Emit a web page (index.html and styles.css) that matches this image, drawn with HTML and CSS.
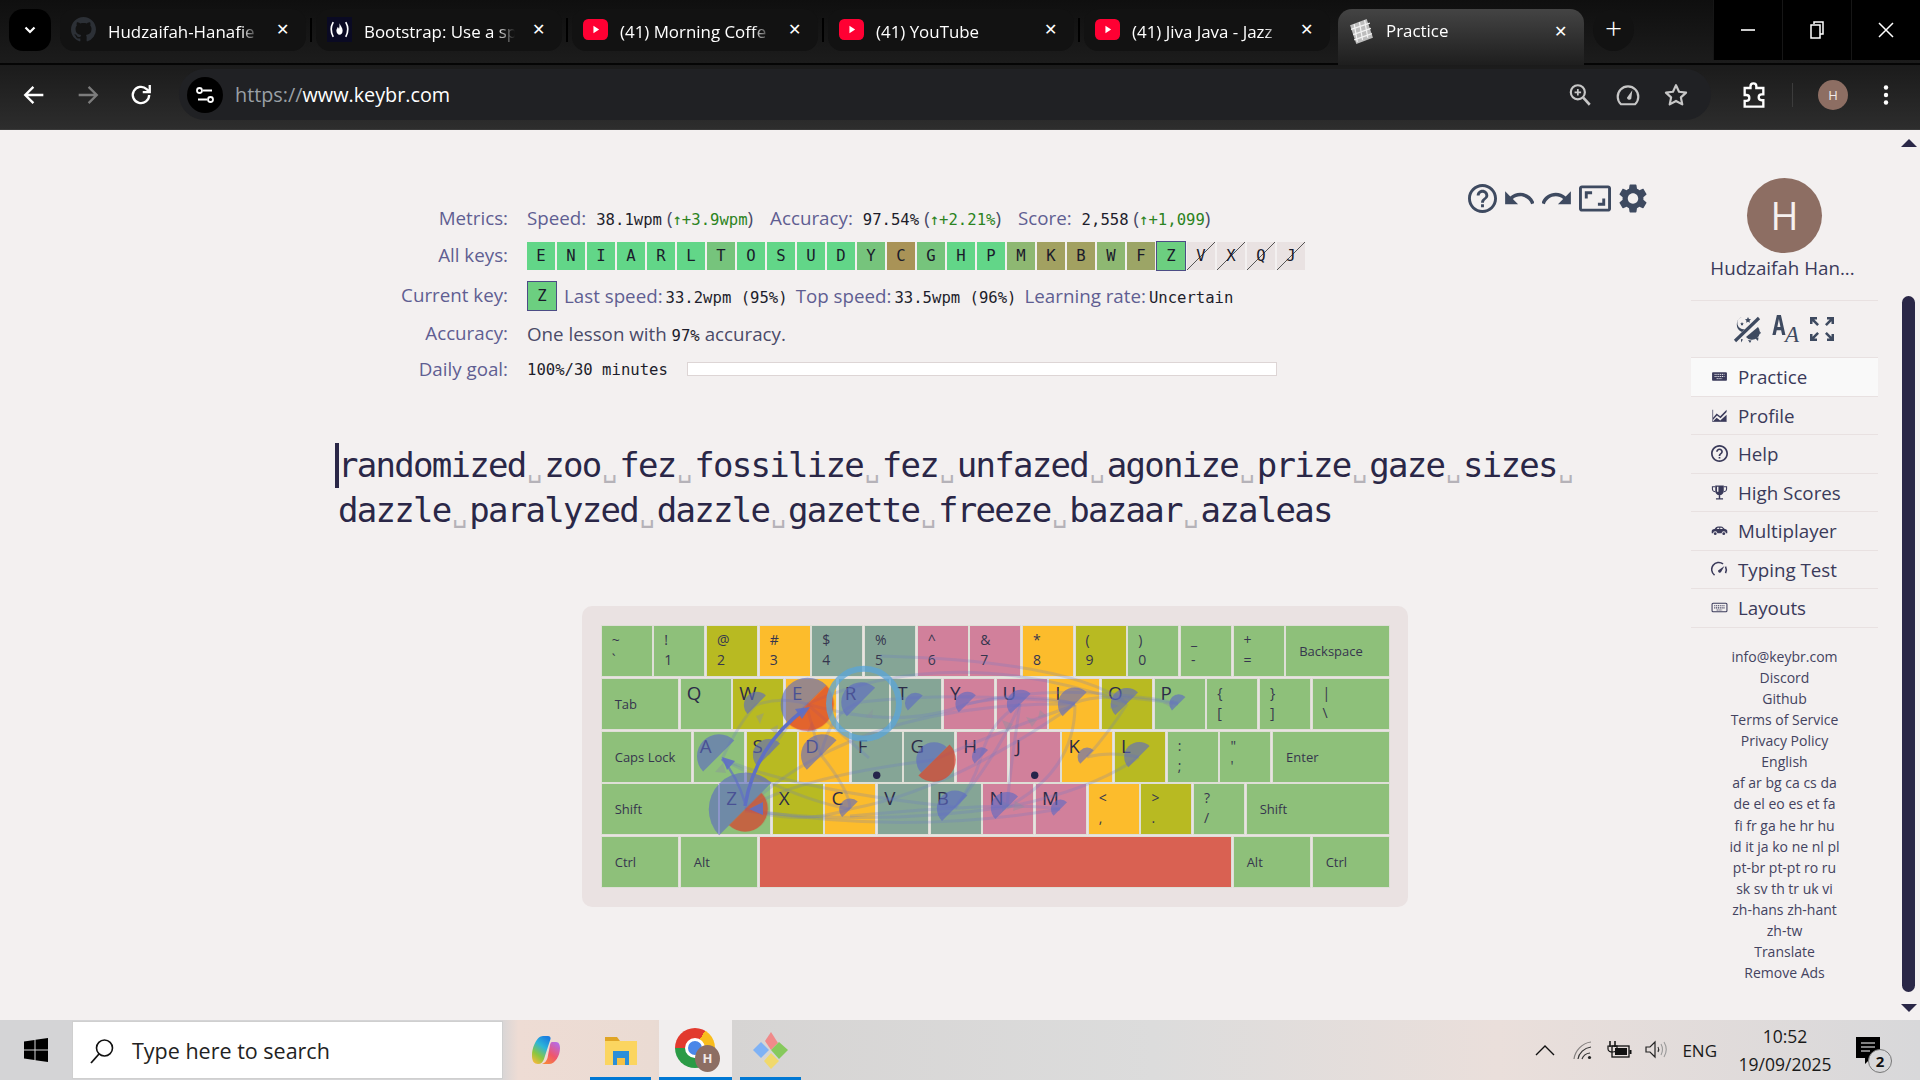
FILE: index.html
```html
<!DOCTYPE html>
<html lang="en">
<head>
<meta charset="utf-8">
<title>Practice</title>
<link rel="stylesheet" href="styles.css">
</head>
<body>
<header class="tabstrip">
  <div class="tab-menu"><svg width="14" height="14" viewBox="0 0 14 14"><path d="M2.5 4.5 7 9l4.500-4.500" fill="none" stroke="#fff" stroke-width="2.200"/></svg></div>
  <div class="tab">
    <svg class="fav" viewBox="0 0 16 16"><path fill="#2c3036" d="M8 0C3.58 0 0 3.58 0 8c0 3.54 2.29 6.53 5.47 7.59.4.07.55-.17.55-.38 0-.19-.01-.82-.01-1.49-2.01.37-2.53-.49-2.69-.94-.09-.23-.48-.94-.82-1.13-.28-.15-.68-.52-.01-.53.63-.01 1.08.58 1.23.82.72 1.21 1.87.87 2.33.66.07-.52.28-.87.51-1.07-1.78-.2-3.64-.89-3.64-3.95 0-.87.31-1.59.82-2.15-.08-.2-.36-1.02.08-2.12 0 0 .67-.21 2.2.82.64-.18 1.32-.27 2-.27.68 0 1.36.09 2 .27 1.53-1.04 2.2-.82 2.2-.82.44 1.1.16 1.92.08 2.12.51.56.82 1.27.82 2.15 0 3.07-1.87 3.75-3.65 3.95.29.25.54.73.54 1.48 0 1.07-.01 1.93-.01 2.2 0 .21.15.46.55.38A8.013 8.013 0 0016 8c0-4.42-3.58-8-8-8z"/></svg>
    <span class="tab-title">Hudzaifah-Hanafie</span><span class="tab-x">✕</span>
  </div>
  <i class="tab-sep"></i>
  <div class="tab">
    <svg class="fav" viewBox="0 0 24 24"><rect width="24" height="24" fill="#0a0a23"/><path d="M6 5Q2 12 6 19M18 5q4 7 0 14" fill="none" stroke="#fff" stroke-width="1.600"/><path d="M12 6c.8 2.500 3 4 3 7s-1.500 4-3 4-3-1.500-3-4c0-1.500 1-2 1.200-3.500.8.5 1.300 1 1.300 2 .5-1.500.5-3.500.5-5.500z" fill="#fff"/></svg>
    <span class="tab-title">Bootstrap: Use a sp</span><span class="tab-x">✕</span>
  </div>
  <i class="tab-sep"></i>
  <div class="tab">
    <svg class="fav" viewBox="0 0 24 24"><rect y="2" width="24" height="20" rx="5" fill="#ff0033"/><path d="M10 8.500v7l5.500-3.500z" fill="#fff"/></svg>
    <span class="tab-title">(41) Morning Coffe</span><span class="tab-x">✕</span>
  </div>
  <i class="tab-sep"></i>
  <div class="tab">
    <svg class="fav" viewBox="0 0 24 24"><rect y="2" width="24" height="20" rx="5" fill="#ff0033"/><path d="M10 8.500v7l5.500-3.500z" fill="#fff"/></svg>
    <span class="tab-title">(41) YouTube</span><span class="tab-x">✕</span>
  </div>
  <i class="tab-sep"></i>
  <div class="tab">
    <svg class="fav" viewBox="0 0 24 24"><rect y="2" width="24" height="20" rx="5" fill="#ff0033"/><path d="M10 8.500v7l5.500-3.500z" fill="#fff"/></svg>
    <span class="tab-title">(41) Jiva Java - Jazz</span><span class="tab-x">✕</span>
  </div>
  <div class="tab tab-active">
    <svg class="fav" viewBox="0 0 24 24"><path d="M1 6 17 0l6 18-16 6z" fill="#bdbdbd"/><path d="M5 5l3 17M10 3l3 17M15 1l3 17M2 10l18-6M4 15l17-6M5 20l17-6" stroke="#f2f2f2" stroke-width="1.200"/></svg>
    <span class="tab-title">Practice</span><span class="tab-x">✕</span>
  </div>
  <div class="tab-new">+</div>
  <div class="win">
    <div class="win-btn"><svg width="14" height="14" viewBox="0 0 14 14"><path d="M0 7h14" stroke="#fff" stroke-width="1.600"/></svg></div>
    <div class="win-btn"><svg width="16" height="18" viewBox="0 0 16 18"><path d="M5 3V1h9v12h-3M2 4h9v13H2z" fill="none" stroke="#fff" stroke-width="1.500"/></svg></div>
    <div class="win-btn"><svg width="16" height="16" viewBox="0 0 16 16"><path d="M1 1l14 14M15 1 1 15" stroke="#fff" stroke-width="1.500"/></svg></div>
  </div>
</header>

<nav class="toolbar">
  <svg class="tb-icon" viewBox="0 0 24 24"><path d="M20 12H5M11.500 5 4.500 12l7 7" fill="none" stroke="#fff" stroke-width="2"/></svg>
  <svg class="tb-icon" viewBox="0 0 24 24"><path d="M4 12h15M12.500 5l7 7-7 7" fill="none" stroke="#7c7c7c" stroke-width="2"/></svg>
  <svg class="tb-icon" viewBox="0 0 24 24"><path d="M19 12a7 7 0 1 1-2.200-5.100L19 9M19.500 3.500V9.500H13.500" fill="none" stroke="#fff" stroke-width="2"/></svg>
  <div class="omni">
    <div class="site-info"><svg width="20" height="20" viewBox="0 0 20 20"><path d="M8 5.500h9M3 14.500h9" stroke="#fff" stroke-width="2"/><circle cx="4.500" cy="5.500" r="2.500" fill="none" stroke="#fff" stroke-width="1.800"/><circle cx="15.500" cy="14.500" r="2.500" fill="none" stroke="#fff" stroke-width="1.800"/></svg></div>
    <div class="url"><span class="url-dim">https://</span>www.keybr.com</div>
    <svg class="omni-icon" viewBox="0 0 24 24"><circle cx="10" cy="9.500" r="6.500" fill="none" stroke="#c7c7c7" stroke-width="2"/><path d="M15 14.500 21 21" stroke="#c7c7c7" stroke-width="2.400"/><path d="M7 9.500h6M10 6.500v6" stroke="#c7c7c7" stroke-width="1.600"/></svg>
    <svg class="omni-icon" viewBox="0 0 24 24"><path d="M5.500 20.500a9.500 9.500 0 1 1 13 0z" fill="none" stroke="#c7c7c7" stroke-width="2"/><path d="M11 14.500 16 7.500l-1 8a2.200 2.200 0 0 1-4-1z" fill="#c7c7c7"/></svg>
    <svg class="omni-icon" viewBox="0 0 24 24"><path d="m12 3 2.800 6 6.500.8-4.800 4.400 1.300 6.500L12 17.500l-5.800 3.200 1.300-6.500-4.800-4.400 6.500-.8z" fill="none" stroke="#c7c7c7" stroke-width="2" stroke-linejoin="round"/></svg>
  </div>
  <svg class="tb-ext" viewBox="0 0 24 24"><path d="M4 6h5V4.500a2.500 2.500 0 0 1 5 0V6h6v5.500h-1.500a2.500 2.500 0 0 0 0 5H20V22H4v-5h1.500a2.500 2.500 0 0 0 0-5H4z" fill="none" stroke="#fff" stroke-width="2"/></svg>
  <i class="tb-sep"></i>
  <div class="tb-avatar">H</div>
  <svg class="tb-kebab" viewBox="0 0 6 24"><circle cx="3" cy="4.500" r="2.200" fill="#fff"/><circle cx="3" cy="12" r="2.200" fill="#fff"/><circle cx="3" cy="19.500" r="2.200" fill="#fff"/></svg>
</nav>

<div class="page">
  <main class="main">
    <div class="tools">
      <svg class="tool tool-help" viewBox="2 2 20 20"><path d="M11 18h2v-2h-2v2zm1-16C6.480 2 2 6.480 2 12s4.480 10 10 10 10-4.480 10-10S17.520 2 12 2zm0 18c-4.410 0-8-3.590-8-8s3.590-8 8-8 8 3.590 8 8-3.590 8-8 8zm0-14c-2.210 0-4 1.790-4 4h2c0-1.100.9-2 2-2s2 .9 2 2c0 2-3 1.750-3 5h2c0-2.250 3-2.500 3-5 0-2.210-1.790-4-4-4z"/></svg>
      <svg class="tool" viewBox="2 4 20 16"><path d="M12.500 8c-2.650 0-5.050.99-6.900 2.600L2 7v9h9l-3.620-3.620c1.390-1.160 3.160-1.880 5.120-1.880 3.540 0 6.550 2.310 7.600 5.500l2.370-.78C21.080 11.030 17.150 8 12.500 8z"/></svg>
      <svg class="tool" viewBox="2 4 20 16"><path d="M18.400 10.600C16.550 8.990 14.150 8 11.500 8c-4.650 0-8.580 3.030-9.960 7.220L3.900 16c1.050-3.190 4.050-5.500 7.600-5.500 1.950 0 3.730.72 5.120 1.880L13 16h9V7l-3.600 3.600z"/></svg>
      <svg class="tool tool-wide" viewBox="1 3 22 18"><path d="M19 12h-2v3h-3v2h5v-5zM7 9h3V7H5v5h2V9zm14-6H3c-1.100 0-2 .9-2 2v14c0 1.100.9 2 2 2h18c1.100 0 2-.9 2-2V5c0-1.100-.9-2-2-2zm0 16.010H3V4.990h18v14.020z"/></svg>
      <svg class="tool" viewBox="2.500 2 19 20"><path d="M19.140 12.940c.04-.3.06-.61.06-.94 0-.32-.02-.64-.07-.94l2.030-1.580c.18-.14.23-.41.12-.61l-1.920-3.320c-.12-.22-.37-.29-.59-.22l-2.390.96c-.5-.38-1.030-.7-1.620-.94l-.36-2.540c-.04-.24-.24-.41-.48-.41h-3.840c-.24 0-.43.17-.47.41l-.36 2.540c-.59.24-1.130.57-1.620.94l-2.390-.96c-.22-.08-.47 0-.59.22L2.740 8.870c-.12.21-.08.47.12.61l2.030 1.580c-.05.3-.09.63-.09.94s.02.64.07.94l-2.030 1.580c-.18.14-.23.41-.12.61l1.920 3.320c.12.22.37.29.59.22l2.390-.96c.5.38 1.030.7 1.620.94l.36 2.540c.05.24.24.41.48.41h3.840c.24 0 .44-.17.47-.41l.36-2.540c.59-.24 1.130-.56 1.620-.94l2.390.96c.22.08.47 0 .59-.22l1.920-3.320c.12-.22.07-.47-.12-.61l-2.010-1.580zM12 15.600c-1.980 0-3.600-1.620-3.600-3.600s1.620-3.600 3.600-3.600 3.600 1.620 3.600 3.600-1.620 3.600-3.600 3.600z"/></svg>
    </div>

    <section class="stats">
      <div class="lab">Metrics:</div>
      <div class="val">
        <span class="name">Speed:</span><span class="m g1">38.1wpm</span><span class="par">(<span class="up m">↑+3.9wpm</span>)</span>
        <span class="name g2">Accuracy:</span><span class="m g1">97.54%</span><span class="par">(<span class="up m">↑+2.21%</span>)</span>
        <span class="name g2">Score:</span><span class="m g1">2,558</span><span class="par">(<span class="up m">↑+1,099</span>)</span>
      </div>
      <div class="lab lab-keys">All keys:</div>
      <div class="val keys">
        <b class="k k-a">E</b><b class="k k-a">N</b><b class="k k-a">I</b><b class="k k-a">A</b><b class="k k-a">R</b><b class="k k-a">L</b><b class="k k-b">T</b><b class="k k-a">O</b><b class="k k-a">S</b><b class="k k-a">U</b><b class="k k-a">D</b><b class="k k-b">Y</b><b class="k k-c">C</b><b class="k k-b">G</b><b class="k k-a">H</b><b class="k k-a">P</b><b class="k k-d">M</b><b class="k k-e">K</b><b class="k k-e">B</b><b class="k k-d">W</b><b class="k k-f">F</b><b class="k k-z">Z</b><b class="k k-n">V</b><b class="k k-n">X</b><b class="k k-n">Q</b><b class="k k-n">J</b>
      </div>
      <div class="lab lab-up">Current key:</div>
      <div class="val">
        <b class="k k-z k-cur">Z</b>
        <span class="name g3">Last speed:</span><span class="m g4">33.2wpm (95%)</span>
        <span class="name g3">Top speed:</span><span class="m g4">33.5wpm (96%)</span>
        <span class="name g3">Learning rate:</span><span class="m g4">Uncertain</span>
      </div>
      <div class="lab">Accuracy:</div>
      <div class="val plain">One lesson with&nbsp;<span class="m">97%</span>&nbsp;accuracy.</div>
      <div class="lab">Daily goal:</div>
      <div class="val daily"><span class="m">100%/30 minutes</span><div class="goal"></div></div>
    </section>

    <section class="text">
      <div class="line line-first">randomized<span class="s">␣</span>zoo<span class="s">␣</span>fez<span class="s">␣</span>fossilize<span class="s">␣</span>fez<span class="s">␣</span>unfazed<span class="s">␣</span>agonize<span class="s">␣</span>prize<span class="s">␣</span>gaze<span class="s">␣</span>sizes<span class="s">␣</span></div>
      <div class="line">dazzle<span class="s">␣</span>paralyzed<span class="s">␣</span>dazzle<span class="s">␣</span>gazette<span class="s">␣</span>freeze<span class="s">␣</span>bazaar<span class="s">␣</span>azaleas</div>
    </section>

    <section class="kb">
      <div class="kb-row">
        <div class="key two g">~<br>`</div><div class="key two g">!<br>1</div><div class="key two o">@<br>2</div><div class="key two y">#<br>3</div><div class="key two t">$<br>4</div><div class="key two t">%<br>5</div><div class="key two p">^<br>6</div><div class="key two p">&amp;<br>7</div><div class="key two y">*<br>8</div><div class="key two o">(<br>9</div><div class="key two g">)<br>0</div><div class="key two g">_<br>-</div><div class="key two g">+<br>=</div><div class="key word g u2">Backspace</div>
      </div>
      <div class="kb-row">
        <div class="key word g u15">Tab</div><div class="key let g">Q</div><div class="key let o">W</div><div class="key let y">E</div><div class="key let t">R</div><div class="key let t">T</div><div class="key let p">Y</div><div class="key let p">U</div><div class="key let y">I</div><div class="key let o">O</div><div class="key let g">P</div><div class="key two g">{<br>[</div><div class="key two g">}<br>]</div><div class="key two g u15">|<br>\</div>
      </div>
      <div class="kb-row">
        <div class="key word g u175">Caps Lock</div><div class="key let g">A</div><div class="key let o">S</div><div class="key let y">D</div><div class="key let t">F</div><div class="key let t">G</div><div class="key let p">H</div><div class="key let p">J</div><div class="key let y">K</div><div class="key let o">L</div><div class="key two g">:<br>;</div><div class="key two g">"<br>'</div><div class="key word g u225">Enter</div>
      </div>
      <div class="kb-row">
        <div class="key word g u225">Shift</div><div class="key let g">Z</div><div class="key let o">X</div><div class="key let y">C</div><div class="key let t">V</div><div class="key let t">B</div><div class="key let p">N</div><div class="key let p">M</div><div class="key two y">&lt;<br>,</div><div class="key two o">&gt;<br>.</div><div class="key two g">?<br>/</div><div class="key word g u275">Shift</div>
      </div>
      <div class="kb-row">
        <div class="key word g u15">Ctrl</div><div class="key word g u15">Alt</div><div class="key r uspace"></div><div class="key word g u15">Alt</div><div class="key word g u15">Ctrl</div>
      </div>
      <svg class="kb-over" viewBox="0 0 826 301">
        <defs><path id="pie" d="M.707-.707A1 1 0 0 0-.707.707Z"/></defs>
        <g transform="translate(-582 -605)">
          <g class="curves">
            <path d="M745 808Q900 835 1060 808"/><path d="M745 810Q880 825 1006 806"/><path d="M745 808Q800 825 850 808"/>
            <path d="M850 808Q950 790 1075 703"/><path d="M722 758Q800 800 850 808"/><path d="M1007 806Q1090 790 1139 756"/>
            <path d="M1007 806Q1075 770 1075 704"/><path d="M1075 703Q1030 690 967 703"/><path d="M807 703Q900 730 967 703"/>
            <path d="M861 701Q960 690 1075 702"/><path d="M1075 702Q1100 690 1178 703"/><path d="M1127 702Q1070 660 880 655"/>
            <path d="M807 703Q950 640 1127 702"/><path d="M1087 756Q1110 750 1139 756"/><path d="M1087 756Q1110 730 1127 703"/>
            <path d="M934 759Q1000 730 1075 704"/><path d="M807 703Q850 740 869 757"/><path d="M768 754Q790 720 807 703"/>
            <path d="M821 754Q810 720 807 705"/><path d="M756 704Q780 695 807 703"/><path d="M722 758Q740 720 756 704"/>
            <path d="M821 754Q850 790 850 808"/><path d="M1020 703Q1010 770 1007 806"/><path d="M981 756Q990 720 1020 703"/>
            <path d="M955 807Q1000 750 1020 703"/><path d="M955 807Q975 780 981 756"/><path d="M745 808Q800 775 934 759"/>
            <path d="M861 701Q830 710 821 754"/><path d="M722 758Q800 790 955 806"/><path d="M745 808Q860 700 1075 703"/>
            <path d="M1060 808Q1010 800 850 815"/><path d="M967 703Q1060 680 1178 702"/>
          </g>
          <g class="heads">
            <path d="M764 712l-8 3 4 8zM778 724l-8 4 7 6zM723 762l-8 9 11 1zM812 720l-5 11 10-1zM1002 719l5 12 6-8zM1026 716l6 10 5-7zM1110 702l9 3-9 3zM1163 702l11-3-2 8zM866 716l7-8-1 9zM1002 800l12 6-12 4zM1015 800l10 6-12 4zM1040 709l7 6-9 2z"/>
          </g>
          <g class="blue">
            <use href="#pie" transform="translate(718.700 755) scale(22)"/><use href="#pie" transform="translate(756.700 703.700) scale(13)"/>
            <use href="#pie" transform="translate(807.300 703.300) scale(27)"/><use href="#pie" transform="translate(861 701) scale(20)"/>
            <use href="#pie" transform="translate(915.300 702) scale(10.500)"/><use href="#pie" transform="translate(967.300 702.700) scale(12)"/>
            <use href="#pie" transform="translate(768.700 753.700) scale(16)"/><use href="#pie" transform="translate(821.700 754) scale(21)"/>
            <use href="#pie" transform="translate(934 759) scale(18)"/><use href="#pie" transform="translate(745.300 808) scale(37)"/>
            <use href="#pie" transform="translate(850 808.300) scale(11)"/><use href="#pie" transform="translate(954.700 807.300) scale(18)"/>
            <use href="#pie" transform="translate(981.300 755.700) scale(9.500)"/><use href="#pie" transform="translate(1020.700 702.700) scale(14)"/>
            <use href="#pie" transform="translate(1074.700 703.300) scale(17)"/><use href="#pie" transform="translate(1126.700 702.700) scale(16)"/>
            <use href="#pie" transform="translate(1178.700 702.700) scale(9.500)"/><use href="#pie" transform="translate(1087 756) scale(9.500)"/>
            <use href="#pie" transform="translate(1139 755.700) scale(15)"/><use href="#pie" transform="translate(1006.700 806.700) scale(16)"/>
            <use href="#pie" transform="translate(1060.300 808) scale(9.500)"/>
          </g>
          <g class="red">
            <use href="#pie" transform="translate(807.300 703.300) rotate(180) scale(27)"/>
            <use href="#pie" transform="translate(934 759) rotate(180) scale(22)"/>
            <use href="#pie" transform="translate(745.300 808) rotate(180) scale(23)"/>
          </g>
          <circle class="ring" cx="864" cy="702.700" r="35"/>
          <path class="thick" d="M745 805Q755 745 805 708"/>
          <path class="thick-head" d="M810 706l-15 2 7 10z"/>
          <path class="thick thin-blue" d="M745 802Q737 775 722 758"/>
          <path class="thick-head" d="M722 756l5 13 8-9zM749 808l14-7v13z"/>
          <circle class="dot" cx="876.700" cy="774.300" r="3.700"/>
          <circle class="dot" cx="1034.700" cy="774.300" r="3.700"/>
        </g>
      </svg>
    </section>
  </main>

  <aside class="side">
    <div class="avatar">H</div>
    <div class="uname">Hudzaifah Han...</div>
    <div class="side-tools">
      <svg class="st-icon" viewBox="0 0 28 28"><path d="M2 26 26 3" stroke="#3e4a60" stroke-width="3.200"/><path d="M9 2a8 8 0 0 0 0 15l3-3a6 6 0 0 1-3-12z" fill="#3e4a60"/><path d="m13 3 1 2 2 .3-1.500 1.500.4 2-1.900-1-1.900 1 .4-2L10 5.300l2-.3zM7 8l.6 1.200 1.200.2-.9.9.2 1.300L7 11l-1.100.6.200-1.300-.9-.9 1.200-.2z" fill="#3e4a60" transform="translate(2 -1)"/><path d="M25 12a7.500 7.500 0 0 1-12 10z" fill="#3e4a60"/><path d="M8 24l2 .5-2 3zM15 25l2 3 1.500-2.500zM22 23l3 3 .5-3.500zM26.500 16l1.500 2-2 1.500z" fill="#3e4a60"/></svg>
      <div class="st-aa"><span class="st-a1">A</span><span class="st-a2">A</span></div>
      <svg class="st-icon st-exp" viewBox="0 0 26 26"><path d="M1 8V1h7v2.500H5.300L10 8.200 8.200 10 3.500 5.300V8zM25 8V1h-7v2.500h2.700L16 8.200 17.800 10l4.700-4.700V8zM1 18v7h7v-2.500H5.300L10 17.800 8.200 16l-4.700 4.700V18zM25 18v7h-7v-2.500h2.700L16 17.800l1.800-1.800 4.700 4.700V18z" fill="#3e4a60"/></svg>
    </div>
    <ul class="menu">
      <li class="item item-on"><svg class="ni" viewBox="0 0 24 24"><path d="M3 6h18c.8 0 1.500.7 1.500 1.500v9c0 .8-.7 1.500-1.500 1.500H3c-.8 0-1.500-.7-1.500-1.500v-9C1.500 6.700 2.200 6 3 6z"/><path d="M5 9h14M5 12h14M8 15h8" stroke="#f9f9f9" stroke-width="1.300" stroke-dasharray="1.600 1"/></svg>Practice</li>
      <li class="item"><svg class="ni" viewBox="0 0 24 24"><path d="M2 21V4h1v11l5-6 5 4 9-9v3l-8.500 9-5-4L3 18v2h19v1z"/><path d="M4 20v-1l4-4 5 4 9-8v9z"/></svg>Profile</li>
      <li class="item"><svg class="ni" viewBox="2 2 20 20"><path d="M11 18h2v-2h-2v2zm1-16C6.480 2 2 6.480 2 12s4.480 10 10 10 10-4.480 10-10S17.520 2 12 2zm0 18c-4.410 0-8-3.590-8-8s3.590-8 8-8 8 3.590 8 8-3.590 8-8 8zm0-14c-2.210 0-4 1.790-4 4h2c0-1.100.9-2 2-2s2 .9 2 2c0 2-3 1.750-3 5h2c0-2.250 3-2.500 3-5 0-2.210-1.790-4-4-4z"/></svg>Help</li>
      <li class="item"><svg class="ni" viewBox="0 0 24 24"><path d="M6 2h12v8a6 6 0 0 1-12 0zM11 15.500h2V20h-2zM7 20h10v2H7z"/><path d="M6 4H2v3c0 2 2 4 4 4M18 4h4v3c0 2-2 4-4 4" fill="none" stroke="#3a3a5a" stroke-width="1.500"/><path d="M8.500 4h2v7h-2z" fill="#f3f0f0"/></svg>High Scores</li>
      <li class="item"><svg class="ni" viewBox="0 0 24 24"><path d="M1 13c0-1.500 1-2.500 4-3l2-2.500C8 7 9 6.500 11 6.500h3c1.500 0 2.500.5 3.500 1.500l2 2c2.500.3 3.500 1.500 3.500 3v3h-2a3 3 0 0 0-6 0H9a3 3 0 0 0-6 0H1z"/><circle cx="6" cy="16.500" r="2"/><circle cx="18" cy="16.500" r="2"/><path d="M8 10l1.500-2h2.200v2zM13 8h2l2 2h-4z" fill="#f3f0f0"/></svg>Multiplayer</li>
      <li class="item"><svg class="ni" viewBox="0 0 24 24"><path d="M5 20A10 10 0 0 1 17 4" fill="none" stroke="#3a3a5a" stroke-width="2.200"/><path d="M20.500 8A10 10 0 0 1 20.500 17" fill="none" stroke="#3a3a5a" stroke-width="2.200"/><path d="M19 7l-5 9a2.500 2.500 0 0 1-4-2.500z"/></svg>Typing Test</li>
      <li class="item"><svg class="ni" viewBox="0 0 24 24"><path d="M3 6h18c.8 0 1.500.7 1.500 1.500v9c0 .8-.7 1.500-1.500 1.500H3c-.8 0-1.500-.7-1.500-1.500v-9C1.500 6.700 2.200 6 3 6z" fill="none" stroke="#3a3a5a" stroke-width="1.500"/><path d="M4.500 9.500h15M4.500 12.500h15M8 15.500h8" stroke="#3a3a5a" stroke-width="1.500" stroke-dasharray="1.600 1"/></svg>Layouts</li>
    </ul>
    <div class="foot">
      <div>info@keybr.com</div><div>Discord</div><div>Github</div><div>Terms of Service</div><div>Privacy Policy</div><div>English</div>
      <div>af ar bg ca cs da</div><div>de el eo es et fa</div><div>fi fr ga he hr hu</div><div>id it ja ko ne nl pl</div><div>pt-br pt-pt ro ru</div><div>sk sv th tr uk vi</div><div>zh-hans zh-hant</div><div>zh-tw</div><div>Translate</div><div>Remove Ads</div>
    </div>
  </aside>

  <div class="scroll">
    <i class="sc-up"></i>
    <i class="sc-thumb"></i>
    <i class="sc-down"></i>
  </div>
</div>

<footer class="taskbar">
  <div class="start"><svg width="24" height="24" viewBox="0 0 24 24"><path d="M0 3.500 10.500 2v9.500H0zM11.500 1.800 24 0v11.500H11.500zM0 12.500h10.500V22L0 20.500zM11.500 12.500H24V24l-12.500-1.800z" fill="#000"/></svg></div>
  <div class="search">
    <svg width="26" height="26" viewBox="0 0 26 26"><circle cx="15.500" cy="10" r="8" fill="none" stroke="#111" stroke-width="1.600"/><path d="M10 16 2 25" stroke="#111" stroke-width="1.800"/></svg>
    <span>Type here to search</span>
  </div>
  <div class="tk tk-copilot"><svg width="30" height="30" viewBox="0 0 30 30"><defs><linearGradient id="cp1" x1=".7" y1="0" x2=".2" y2="1"><stop offset="0" stop-color="#1b7fe0"/><stop offset=".35" stop-color="#2cb5d8"/><stop offset=".7" stop-color="#8cc63f"/><stop offset="1" stop-color="#f5b93a"/></linearGradient><linearGradient id="cp2" x1=".8" y1="0" x2=".2" y2="1"><stop offset="0" stop-color="#b66be8"/><stop offset=".55" stop-color="#f0566a"/><stop offset="1" stop-color="#f7873a"/></linearGradient></defs><path d="M12 1h5c2 0 3 1.500 2.500 3L13 24c-1 3-3 5-6 5-4 0-6-3-6-8C1 12 6 1 12 1z" fill="url(#cp1)"/><path d="M21 7h4c3 0 4 3 4 6 0 8-5 16-11 16h-7c3-1 4.500-3 5.500-6L19 10c.3-1.500 1-3 2-3z" fill="url(#cp2)"/></svg></div>
  <div class="tk tk-folder"><svg width="34" height="30" viewBox="0 0 34 30"><path d="M1 2h12l3 4H1z" fill="#e0a526"/><path d="M1 6h32v24H1z" fill="#fbd560"/><path d="M9 16h16v14H9z" fill="#2b8fd8"/><path d="M13 23h8v7h-8z" fill="#f5c144"/></svg></div>
  <div class="tk tk-chrome">
    <div class="chrome-logo"><i class="chrome-core"></i></div>
    <div class="chrome-badge">H</div>
  </div>
  <div class="tk tk-git"><svg width="38" height="38" viewBox="0 0 38 38"><path d="M19 0l7 11-7 7-6-9z" fill="#f08a8a" transform="translate(0 1)"/><path d="M9 11l8 8-8 8-8-8z" fill="#7fb2f5"/><path d="M27 11l9 8-9 9-8-9z" fill="#86c95c"/><path d="M19 22l8 8-8 8-7-8z" fill="#f1d96c"/></svg></div>
  <div class="tray">
    <svg width="20" height="12" viewBox="0 0 20 12"><path d="M1 11 10 2l9 9" fill="none" stroke="#111" stroke-width="1.400"/></svg>
    <svg width="20" height="20" viewBox="0 0 20 20"><g fill="none" stroke="#333" stroke-width="1.200"><path d="M1 19C2 11 9 3 18 2" opacity=".55"/><path d="M5 19C6 13 11 8 18 7"/><path d="M9 19c1-3 3.500-5.500 8-6"/></g><circle cx="16.500" cy="17.500" r="1.600" fill="#222"/></svg>
    <svg width="26" height="20" viewBox="0 0 26 20"><path d="M4 1v6M9 1v6" stroke="#111" stroke-width="1.500"/><path d="M2 6h9v3c0 2-2 3-4.500 3S2 11 2 9z" fill="none" stroke="#111" stroke-width="1.200"/><rect x="6" y="6" width="17" height="11" fill="none" stroke="#111" stroke-width="1.300"/><rect x="9" y="8" width="12" height="7" fill="#111"/><rect x="23.500" y="10" width="2" height="4" fill="#111"/></svg>
    <svg width="23" height="20" viewBox="0 0 23 20"><path d="M1 7h4l5-5v15l-5-5H1z" fill="none" stroke="#222" stroke-width="1.200"/><path d="M13 7q1.500 2.500 0 5" fill="none" stroke="#333" stroke-width="1.100"/><path d="M16 4q3 5.500 0 11M19 2q4.500 7.500 0 15" fill="none" stroke="#999" stroke-width="1.100"/></svg>
    <span class="lang">ENG</span>
    <div class="clock"><div>10:52</div><div>19/09/2025</div></div>
    <div class="notif">
      <svg width="24" height="28" viewBox="0 0 24 28"><path d="M0 0h24v21H15l-6 6v-6H0z" fill="#000"/><path d="M5 6h14M5 10h14M5 14h9" stroke="#fff" stroke-width="1.200"/></svg>
      <span class="notif-badge">2</span>
    </div>
  </div>
</footer>
</body>
</html>
```
FILE: styles.css
```css
* { box-sizing: border-box; }
html, body { margin: 0; height: 100%; }
body {
  width: 1920px;
  height: 1080px;
  overflow: hidden;
  display: flex;
  flex-direction: column;
  font-family: "Open Sans", "Noto Sans", sans-serif;
  background: #f3f0f0;
}
i { display: block; font-style: normal; }

/* tab strip */
.tabstrip {
  height: 65px;
  flex: none;
  display: flex;
  align-items: flex-start;
  padding: 9px 0 0 9px;
  background: linear-gradient(#0f0f0f, #1c1c1c);
  border-bottom: 2px solid #050505;
}
.tab-menu {
  width: 42px;
  height: 42px;
  border-radius: 14px;
  background: #000;
  display: flex;
  align-items: center;
  justify-content: center;
  margin-right: 9px;
}
.tab {
  width: 246px;
  height: 42px;
  border-radius: 14px;
  background: #121212;
  display: flex;
  align-items: center;
  padding: 2px 0 0 11px;
  color: #fff;
  font-size: 16.900px;
  flex: none;
}
.fav { width: 25px; height: 25px; flex: none; margin-top: -3px; }
.tab-title {
  width: 151px;
  margin-left: 12px;
  white-space: nowrap;
  overflow: hidden;
  -webkit-mask-image: linear-gradient(to right, #000 88%, transparent);
  mask-image: linear-gradient(to right, #000 88%, transparent);
}
.tab-x {
  margin: -3px 0 0 17px;
  font-size: 16px;
  font-family: "DejaVu Sans", sans-serif;
  font-weight: 700;
  line-height: 1;
}
.tab-sep {
  width: 2px;
  height: 24px;
  margin: 9px 4px;
  background: #000;
  flex: none;
}
.tab-active {
  height: 56px;
  margin-left: 8px;
  margin-right: 9px;
  align-items: flex-start;
  padding-top: 10px;
  background: linear-gradient(#444, #1e1e1e);
  border-radius: 14px 14px 0 0;
}
.tab-active .fav { margin-top: 0; }
.tab-active .tab-x { margin-top: 5px; }
.tab-new {
  width: 41px;
  height: 42px;
  border-radius: 50%;
  background: #121212;
  color: #fff;
  font-size: 30px;
  line-height: 38px;
  text-align: center;
  font-weight: 300;
  flex: none;
}
.win {
  margin-left: auto;
  margin-top: -9px;
  height: 60px;
  display: flex;
  background: #000;
  flex: none;
}
.win-btn {
  width: 69px;
  height: 60px;
  display: flex;
  align-items: center;
  justify-content: center;
  border-left: 1px solid #161616;
}

/* toolbar */
.toolbar {
  height: 65px;
  flex: none;
  display: flex;
  align-items: center;
  padding: 0 0 5px 20px;
  background: linear-gradient(#1b1b1b, #2d2d2d);
  border-bottom: 1px solid #3a3a3a;
}
.tb-icon { width: 28px; height: 28px; margin-right: 25.500px; flex: none; }
.tb-icon:nth-of-type(3) { margin-right: 25px; }
.omni {
  width: 1532px;
  height: 51px;
  border-radius: 26px;
  background: #202124;
  display: flex;
  align-items: center;
  padding: 0 22px 0 7px;
  flex: none;
  margin-left: -1px;
}
.site-info {
  width: 36px;
  height: 36px;
  border-radius: 50%;
  background: #000;
  display: flex;
  align-items: center;
  justify-content: center;
  flex: none;
  margin-left: 1px;
}
.url {
  margin-left: 12px;
  font-size: 19.800px;
  color: #fff;
  flex: 1;
}
.url-dim { color: #9aa0a6; }
.omni-icon { width: 26px; height: 26px; margin-left: 22px; flex: none; }
.tb-ext { width: 28px; height: 28px; margin-left: 29px; flex: none; }
.tb-sep { width: 1px; height: 24px; background: #3c3c3c; margin-left: 24px; }
.tb-avatar {
  width: 30px;
  height: 30px;
  border-radius: 50%;
  margin-left: 25px;
  background: #8d6e63;
  color: #f1e9e6;
  font-size: 13px;
  text-align: center;
  line-height: 30px;
}
.tb-kebab { width: 6px; height: 24px; margin-left: 35px; }

/* page */
.page { flex: 1; display: flex; min-height: 0; }
.main { width: 1691px; flex: none; padding-top: 54px; }
.tools {
  height: 29px;
  display: flex;
  justify-content: flex-end;
  align-items: center;
  padding-right: 44px;
}
.tool {
  width: 29px;
  height: 23px;
  margin-left: 8px;
  fill: #3e4a60;
}
.tool-help { height: 29px; }
.tool-wide { width: 32px; height: 27px; }
.tool:last-child { height: 29px; width: 28px; }

.stats {
  margin-top: -15px;
  display: grid;
  grid-template-columns: 508px 1fr;
  grid-template-rows: 38px 40px 38px 36px 37px;
  column-gap: 19px;
  font-size: 18.750px;
}
.lab { text-align: right; color: #5f5e92; display: flex; align-items: center; justify-content: flex-end; }
.lab-keys { margin-top: -3px; }
.lab-up { margin-top: -1px; }
.val { display: flex; align-items: baseline; padding-top: 7px; color: #5f5e92; white-space: nowrap; }
.plain { color: #4a4a68; }
.daily { padding-top: 11px; }
.m { font-family: "DejaVu Sans Mono", monospace; font-size: 15.600px; color: #1d1d2b; }
.name { color: #5f5e92; }
.par { color: #4a4a68; margin-left: 5px; }
.up { color: #2b8321; }
.g1 { margin-left: 10px; }
.g2 { margin-left: 17px; }
.g3 { margin-left: 8px; }
.g4 { margin-left: 3px; }
.keys { gap: 2px; align-items: center; padding-top: 0; }
.k {
  width: 28px;
  height: 28px;
  flex: none;
  display: flex;
  align-items: center;
  justify-content: center;
  font-family: "DejaVu Sans Mono", monospace;
  font-size: 15.600px;
  font-weight: 400;
  color: #1a1a2a;
}
.k-a { background: #62d688; }
.k-b { background: #76c47c; }
.k-c { background: #a99357; }
.k-d { background: #8eb872; }
.k-e { background: #a2a161; }
.k-f { background: #9ca566; }
.k-z { background: #6ccf80; outline: 1px solid #4c4c85; }
.k-n {
  background: linear-gradient(to bottom right, transparent calc(50% - .6px), #555 50%, transparent calc(50% + .6px)), #e9e2e2;
}
.k-cur { width: 28px; height: 28px; margin: -1px 0 0 1px; align-self: flex-start; }
.goal {
  width: 590px;
  height: 14px;
  margin-left: 19px;
  align-self: flex-start;
  margin-top: 1px;
  background: #fff;
  border: 1px solid #ddd5d5;
}

/* text */
.text {
  margin: 55.500px 0 0 338px;
  font-family: "DejaVu Sans Mono", monospace;
  font-size: 34px;
  line-height: 45px;
  letter-spacing: -1.720px;
  color: #2a2747;
  white-space: nowrap;
}
.line { position: relative; height: 45px; }
.line-first::before {
  content: "";
  position: absolute;
  left: -3px;
  top: 0;
  width: 4px;
  height: 45px;
  background: #2a2747;
}
.s {
  display: inline-block;
  width: 18.750px;
  font-size: 25px;
  line-height: 1;
  letter-spacing: 0;
  text-align: center;
  color: #b5b2b8;
}

/* keyboard */
.kb {
  position: relative;
  width: 826px;
  height: 301px;
  margin: 73px 0 0 582px;
  padding: 20.700px 0 0 19.700px;
  background: #eae2e2;
  border-radius: 10px;
}
.kb-row { display: flex; gap: 2.670px; margin-bottom: 2.670px; }
.key {
  width: 50px;
  height: 50px;
  flex: none;
  color: #36364e;
  box-shadow: 0 0 0 1px #dedfd6;
}
.g { background: #8ec07a; }
.o { background: #b8ba22; }
.y { background: #fcbc2c; }
.t { background: #85a596; }
.p { background: #d1809b; }
.r { background: #d96152; }
.two { font-size: 14px; line-height: 20px; padding: 4px 0 0 10px; }
.let { font-size: 18.750px; line-height: 26px; padding: 1px 0 0 6px; color: #2c2c48; }
.word { font-size: 13px; display: flex; align-items: center; padding-left: 13px; }
.u15 { width: 76.330px; }
.u175 { width: 89.500px; }
.u2 { width: 102.670px; }
.u225 { width: 115.830px; }
.u275 { width: 142.170px; }
.uspace { width: 471.330px; }
.kb-over { position: absolute; left: 0; top: 0; width: 826px; height: 301px; }
.curves path { fill: none; stroke: #6a78c8; stroke-width: 3; opacity: .24; }
.heads path { fill: #8a90a0; opacity: .4; }
.blue { fill: #5c6ac4; opacity: .62; }
.red { fill: #d9422e; opacity: .72; }
.ring { fill: none; stroke: #5ba6d8; stroke-width: 6; opacity: .75; }
.thick { fill: none; stroke: #5f6fc4; stroke-width: 3.500; }
.thin-blue { stroke-width: 2.500; opacity: .7; }
.thick-head { fill: #5f6fc4; opacity: .9; }
.dot { fill: #25244a; }

/* sidebar */
.side { width: 187px; flex: none; padding-top: 48px; color: #3a3a5a; }
.avatar {
  width: 75px;
  height: 75px;
  margin: 0 auto;
  border-radius: 50%;
  background: #8d6e63;
  color: #f6f1ef;
  font-size: 38px;
  line-height: 75px;
  text-align: center;
}
.uname { font-size: 18.750px; text-align: center; margin-top: 2px; padding-right: 4px; line-height: 26px; color: #3a3a5a; }
.side-tools {
  margin-top: 19px;
  border-top: 1px solid #e8e1e1;
  height: 57px;
  display: flex;
  align-items: center;
  padding: 0 0 0 42px;
  gap: 11px;
}
.st-icon { width: 28px; height: 28px; flex: none; }
.st-exp { width: 26px; height: 26px; }
.st-aa { width: 26px; height: 28px; display: flex; flex: none; color: #3e4a60; }
.st-a1 {
  display: block;
  width: 13px;
  font-family: "DejaVu Sans Mono", monospace;
  font-weight: 700;
  font-size: 27px;
  line-height: 22px;
  transform: scaleX(.85);
  transform-origin: left;
}
.st-a2 {
  display: block;
  width: 13px;
  margin-top: 9px;
  font-family: "Liberation Serif", serif;
  font-style: italic;
  font-size: 23px;
  line-height: 22px;
}
.menu { list-style: none; margin: 0; padding: 0; border-top: 1px solid #e8e1e1; }
.item {
  height: 38.500px;
  display: flex;
  align-items: center;
  padding-left: 20px;
  font-size: 18.750px;
  border-bottom: 1px solid #e8e1e1;
  color: #3a3a5a;
}
.item-on { background: #f9f9f9; }
.ni { width: 17px; height: 17px; margin-right: 10px; fill: #3a3a5a; flex: none; }
.foot {
  margin-top: 18px;
  font-size: 14px;
  line-height: 21.130px;
  text-align: center;
  color: #43435f;
}

/* scrollbar */
.scroll {
  width: 42px;
  flex: none;
  padding: 9px 5px 0 24px;
  display: flex;
  flex-direction: column;
  align-items: center;
}
.sc-up { width: 0; height: 0; border: 8px solid transparent; border-top: 0; border-bottom: 8px solid #2a2747; }
.sc-thumb { width: 13px; height: 696px; margin-top: 149px; background: #2a2747; border-radius: 7px; }
.sc-down { width: 0; height: 0; margin-top: 12px; border: 8px solid transparent; border-bottom: 0; border-top: 8px solid #2a2747; }

/* taskbar */
.taskbar {
  height: 60px;
  flex: none;
  display: flex;
  align-items: center;
  background: linear-gradient(to right, #d4d4d6 0, #d4d4d6 26%, #eedcd4 27%, #eadbd3 34%, #d6d4d3 38%, #dcdcdc 60%, #eadfdb 78%, #d8d8da 100%);
}
.start { width: 73px; display: flex; justify-content: center; padding-right: 1px; }
.search {
  width: 429px;
  height: 56px;
  background: #fff;
  display: flex;
  align-items: center;
  padding: 1px 0 0 16px;
  font-size: 21.500px;
  color: #222;
  box-shadow: 0 0 0 1px #cfcfcf;
}
.search span { margin-left: 17px; }
.tk {
  height: 60px;
  display: flex;
  align-items: center;
  justify-content: center;
  flex: none;
  position: relative;
}
.tk-copilot { width: 88px; }
.tk-folder { width: 61px; border-bottom: 3px solid #0078d4; padding-top: 3px; }
.tk-chrome { width: 73px; margin-left: 8px; background: #f1eeee; border-bottom: 3px solid #0078d4; padding-top: 3px; }
.tk-git { width: 61px; margin-left: 8px; border-bottom: 3px solid #0078d4; padding-top: 3px; }
.chrome-logo {
  width: 40px;
  height: 40px;
  margin: -4px 2px 0 0;
  border-radius: 50%;
  background: conic-gradient(from 30deg, #f9bd1c 0 120deg, #2b9b46 120deg 240deg, #e23a2e 240deg 360deg);
  display: flex;
  align-items: center;
  justify-content: center;
}
.chrome-core { width: 20px; height: 20px; border-radius: 50%; background: #4a87e8; border: 3px solid #fff; }
.chrome-badge {
  position: absolute;
  left: 36px;
  top: 25px;
  width: 25px;
  height: 27px;
  border-radius: 50%;
  background: #8d6e63;
  color: #f1e9e6;
  font-size: 13px;
  font-weight: 700;
  text-align: center;
  line-height: 27px;
}
.tray {
  margin-left: auto;
  display: flex;
  align-items: center;
  padding-right: 7px;
  height: 60px;
  color: #1a1a1a;
}
.tray > svg:nth-child(1) { margin-right: 18px; }
.tray > svg:nth-child(2) { margin-right: 13px; }
.tray > svg:nth-child(3) { margin-right: 13px; }
.lang { font-size: 17px; margin-left: 14px; }
.clock { margin-left: 20px; width: 96px; text-align: center; font-size: 17.500px; line-height: 28px; }
.notif { position: relative; margin: 2px 33px 0 23px; width: 24px; height: 28px; }
.notif svg { display: block; }
.notif-badge {
  position: absolute;
  left: 12px;
  top: 12px;
  width: 24px;
  height: 24px;
  border-radius: 50%;
  border: 1px solid #777;
  background: #d8d8da;
  color: #111;
  font-size: 15px;
  font-weight: 700;
  text-align: center;
  line-height: 22px;
}
```
